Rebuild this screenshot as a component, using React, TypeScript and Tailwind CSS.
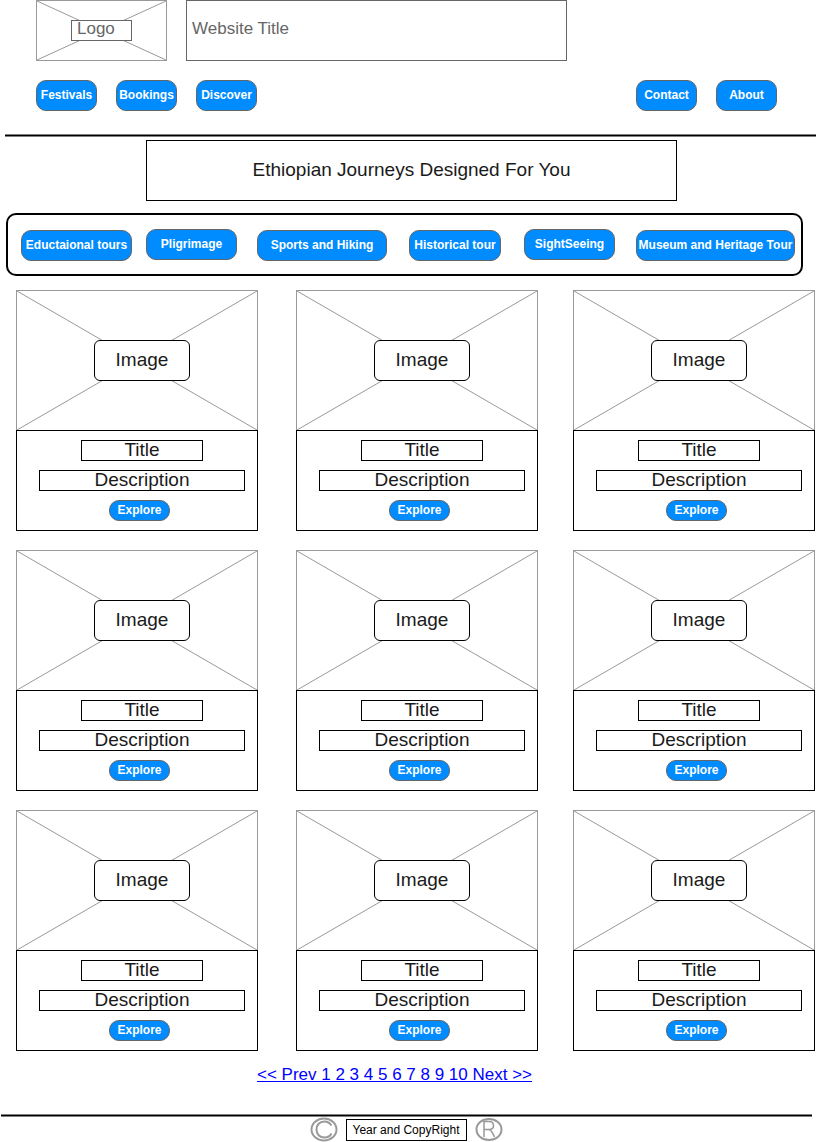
import React from "react";

const blueButton =
  "flex items-center justify-center whitespace-nowrap border border-[#666666] bg-[#008cff] pb-0.5 text-xs font-bold text-white";

function Cross() {
  return (
    <svg
      className="absolute inset-0 h-full w-full"
      viewBox="0 0 100 100"
      preserveAspectRatio="none"
      fill="none"
      stroke="#999999"
      aria-hidden="true"
    >
      <path d="M0 0 L100 100 M100 0 L0 100" vectorEffect="non-scaling-stroke" />
    </svg>
  );
}

function NavButton({ label }: { label: string }) {
  return (
    <button type="button" className={`${blueButton} h-[31px] w-[61px] rounded-[10px]`}>
      {label}
    </button>
  );
}

const tours = [
  { label: "Eductaional tours", size: "w-[111px] mt-px" },
  { label: "Pligrimage", size: "w-[91px]" },
  { label: "Sports and Hiking", size: "w-[130px] mt-px" },
  { label: "Historical tour", size: "w-[92px] mt-px" },
  { label: "SightSeeing", size: "w-[91px]" },
  { label: "Museum and Heritage Tour", size: "w-[159px] mt-px" },
];

function Card() {
  return (
    <article className="w-[242px] text-[19px] leading-[17px] text-[#1a1a1a]">
      <div className="relative flex h-[140px] items-center justify-center border border-b-0 border-[#999999] pl-[10px]">
        <Cross />
        <div className="relative flex h-[41px] w-24 items-center justify-center rounded-md border border-black bg-white pb-0.5">
          Image
        </div>
      </div>
      <div className="flex flex-col items-center gap-[9px] border border-black pt-[9px] pb-[9px] pl-[10px]">
        <h2 className="h-[21px] w-[122px] border border-black text-center">Title</h2>
        <p className="h-[21px] w-[206px] border border-black text-center">Description</p>
        <button type="button" className={`${blueButton} mr-[5px] h-[21px] w-[61px] rounded-[10px]`}>
          Explore
        </button>
      </div>
    </article>
  );
}

export default function App() {
  return (
    <div className="bg-white font-['Liberation_Sans',Arial,sans-serif] text-[#1a1a1a]">
      <header>
        <div className="flex gap-[19px] pr-[249px] pl-9 text-[17px] text-[#666666]">
          <div className="relative flex h-[61px] w-[131px] items-center justify-center border border-[#999999]">
            <Cross />
            <div className="relative h-[21px] w-[61px] border border-[#666666] bg-white pl-[5px] leading-[15px]">
              Logo
            </div>
          </div>
          <h1 className="flex h-[61px] flex-1 items-center border border-[#666666] px-[5px] pb-1">
            Website Title
          </h1>
        </div>
        <nav className="flex justify-between pt-[19px] pr-[39px] pb-[23px] pl-9">
          <div className="flex gap-[19px]">
            <NavButton label="Festivals" />
            <NavButton label="Bookings" />
            <NavButton label="Discover" />
          </div>
          <div className="flex gap-[19px]">
            <NavButton label="Contact" />
            <NavButton label="About" />
          </div>
        </nav>
        <div className="ml-[5px] h-[3px] border-y border-[#808080] bg-black" />
      </header>

      <main>
        <h2 className="mt-[3px] mr-[139px] ml-[146px] flex h-[61px] items-center justify-center border border-black text-[19px]">
          Ethiopian Journeys Designed For You
        </h2>

        <nav className="mt-3 mr-[13px] ml-[6px] grid h-[63px] grid-cols-[125fr_111fr_152fr_115fr_112fr_159fr] items-start rounded-[10px] border-2 border-black pt-[14px] pr-[6px] pl-[13px]">
          {tours.map((t) => (
            <button key={t.label} type="button" className={`${blueButton} h-[31px] rounded-[10px] ${t.size}`}>
              {t.label}
            </button>
          ))}
        </nav>

        <section className="mt-[14px] grid grid-cols-[280fr_277fr_242fr] gap-y-[19px] pr-px pl-4">
          {Array.from({ length: 9 }, (_, i) => (
            <Card key={i} />
          ))}
        </section>

        <nav className="mt-[14px] pr-[27px] text-center text-[17px] leading-5">
          <a href="#pages" className="text-[#0000ff] underline">
            &lt;&lt; Prev 1 2 3 4 5 6 7 8 9 10 Next &gt;&gt;
          </a>
        </nav>
      </main>

      <footer className="mt-[29px]">
        <div className="mr-1 ml-px h-[3px] border-y border-[#808080] bg-black" />
        <div className="flex items-center justify-center gap-2 pr-1">
          <svg width="28" height="25" viewBox="0 0 28 25" fill="none" stroke="#999999" strokeWidth="2" aria-hidden="true">
            <ellipse cx="14" cy="12.5" rx="12.5" ry="11" />
            <path d="M21.5 8.5 C19.5 5.5 17 4.5 14.5 4.5 C9.5 4.5 6.5 8 6.5 12.5 C6.5 17 9.5 20.5 14.5 20.5 C17.5 20.5 20 19.5 21.5 16.5" />
          </svg>
          <p className="flex h-[22px] w-[121px] items-center justify-center border border-black text-xs text-black">
            Year and CopyRight
          </p>
          <svg width="28" height="25" viewBox="0 0 28 25" fill="none" stroke="#999999" aria-hidden="true">
            <ellipse cx="14" cy="12.5" rx="12.5" ry="10.5" strokeWidth="2" />
            <path d="M9 20 V4.5 H14 C20 4.5 20 12.5 14 12.5 H9 M14 12.5 C16.5 13 18 17 19.5 20" strokeWidth="1.5" />
          </svg>
        </div>
      </footer>
    </div>
  );
}
